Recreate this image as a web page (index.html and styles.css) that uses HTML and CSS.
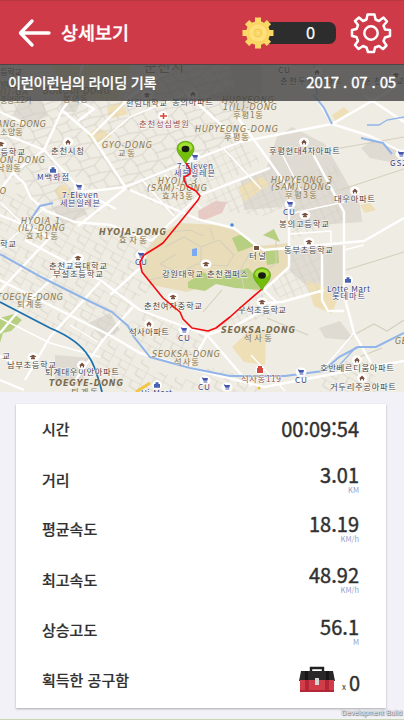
FILE: index.html
```html
<!DOCTYPE html>
<html lang="ko">
<head>
<meta charset="utf-8">
<title>상세보기</title>
<link rel="stylesheet" href="styles.css">
</head>
<body>
<div class="app">
  <header class="header">
    <svg class="back" width="34" height="30" viewBox="0 0 34 30"><path d="M14 3 2.500 15 14 27M3 15H31"/></svg>
    <h1 class="title">상세보기</h1>
    <div class="coins">
      <svg class="coin" width="32" height="32" viewBox="-16 -16 32 32">
        <g fill="#fbd765"><circle r="12"/><path id="ct" d="M-3-15.500H3V15.500H-3Z"/><use href="#ct" transform="rotate(45)"/><use href="#ct" transform="rotate(90)"/><use href="#ct" transform="rotate(135)"/></g>
        <circle r="9.300" fill="#ffe07a" stroke="#f8cd5b" stroke-width=".8"/><circle r="4" fill="#fcda69" stroke="#f3c755"/><circle r="1.700" fill="#ffe78e" stroke="#f3c755" stroke-width=".6"/>
      </svg>
      <div class="count">0</div>
    </div>
    <svg class="gear" width="42" height="42" viewBox="-21 -21 42 42">
      <path d="M-3.500-18.500H3.500L4.500-13.500 8-12 12.500-15.500 16-11.500 12.500-7.500 14-3.500 19-3V3L14 4.500 12.500 8 15.500 12.500 12 16 8 13 4 14.500 3 19H-3L-4.500 14.500-8 13-12.500 16-16 12 -13 8-14.500 4-19 3V-3L-14.500-4-13-8-16-12-12-15.500-8-12-4.500-13.500Z"/><circle r="6.700"/>
    </svg>
  </header>
  <section class="map">
    <svg class="map-art" width="404" height="328" viewBox="0 64 404 328">
      <defs>
        <pattern id="ga" width="19" height="13" patternUnits="userSpaceOnUse" patternTransform="rotate(28)"><path d="M0 0H19M0 0V13M10 0V7L19 8"/></pattern>
        <pattern id="gb" width="15" height="9" patternUnits="userSpaceOnUse" patternTransform="rotate(-25)"><path d="M0 0H15M0 0V9M7 0V9"/></pattern>
        <pattern id="gc" width="23" height="17" patternUnits="userSpaceOnUse" patternTransform="rotate(-33)"><path d="M0 0 12 3 23 0M0 0 2 9 0 17M12 3V12L0 9M12 12 23 17"/></pattern>
        <g id="school"><ellipse rx="5.500" ry="4.500" fill="#fff"/><path d="M-3.500-.5 0-2.300 3.500-.5 0 1.200ZM-2 1V2.200H2V1" fill="#79513f"/></g>
        <g id="home"><ellipse rx="5" ry="4.500" fill="#fff"/><path d="M-3 .5 0-2.500 3 .5H2V2.500H.8V1H-.8V2.500H-2V.5Z" fill="#79513f"/></g>
        <g id="cart"><ellipse rx="5.500" ry="4.500" fill="#fff"/><path d="M-3.300-2.500H-2L-1.500-2H3L2.300.8H-1.500ZM-1.500 1.500H2.300V2.500H-1.500Z" fill="#4354ae"/></g>
        <g id="mart"><ellipse rx="5" ry="4.500" fill="#fff"/><path d="M-3-1H3V2.700H-3ZM-1.500-1V-2.700H1.500V-1" fill="#4962b4"/></g>
        <g id="pin"><path d="M0 15C-2 9-8.500 6-8.500-.5A8.500 7.300 0 0 1 8.500-.5C8.500 6 2 9 0 15Z" fill="#74bd0c" stroke="#5a9e0e" stroke-width=".7"/><path d="M-7-1A7 5.500 0 0 1 7-1C5 4-5 4-7-1Z" fill="#a3df36"/><ellipse rx="3.900" ry="3.300" fill="#161c10"/></g>
      </defs>
      <path fill="#efece3" d="M0 64H404V392H0Z"/>
      <g fill="#dfdad2">
        <path d="M18 101 42 100 48 116 28 124 14 116ZM62 94 82 97 76 112 60 112ZM207 96 238 86 262 100 244 112ZM228 60H262V94L237 96ZM52 207 81 200 87 214 63 225ZM241 181 269 168 286 188 282 207 244 210ZM277 137 292 127 325 144 360 205 362 222 289 227 281 196 267 166ZM361 148 376 138 403 151 395 163 370 158ZM289 247 322 244 324 290 303 283 289 270ZM322 246 343 245 343 296 325 300ZM319 328 340 321 353 338 348 340 325 338ZM88 323 110 313 120 330 104 340ZM55 355 90 358 82 385 55 382Z"/>
      </g>
      <g fill="#eedfb7">
        <path d="M107 107 121 102 128 114 109 119ZM87 135 98 127 112 136 97 145ZM54 190 64 184 76 197 61 204ZM232 347 250 330 266 333 265 365 244 362ZM332 115 344 107 349 112 335 121ZM238 187 260 176 270 184 244 202ZM306 281 326 286 337 300 332 314 314 306ZM360 205 370 203 376 210 365 213ZM48 64 130 64 130 77 117 101 75 97Z"/>
        <path fill="#e9ddb9" d="M158 235 180 223 220 225 243 234 258 246 290 243 288 268 260 292 220 282 187 292 151 285 142 272 145 253Z"/>
      </g>
      <path fill="#e8cac4" d="M198 211 215 201 227 202 222 213 199 222Z"/>
      <path fill="#b7cf80" d="M188 282 203 272 216 279 232 273 248 268 260 281 264 290 235 288 216 284 205 291 188 288ZM232 238 242 234 254 246 238 252ZM265 250 278 248 279 263 267 265ZM0 318 14 314 22 320 11 331 3 333 0 343ZM263 235 274 229 280 242Z"/>
      <g fill="none" stroke="#d6cfbd" stroke-width="1.100"><path d="M165 247 184 237 201 247 219 240 234 255 227 266 197 264 178 273 160 264 176 254M201 247V263M250 253 240 270 244 288M150 280 190 270M203 312 222 290M163 305 200 306M276 240V263L254 280M210 228 214 240M170 232 190 230 204 236M346 270 404 252M350 337 374 324 387 331 404 320M352 360 382 348M267 318 308 335M335 149 404 137M340 190 404 169"/></g>
      <g class="streets">
        <path fill="url(#gc)" d="M0 101H128L178 64H230L240 142 188 163 126 187 90 190 45 149 0 132Z"/>
        <path fill="url(#gc)" d="M0 134 44 151 83 192 113 208 76 222 38 205 24 188 0 177Z"/>
        <path fill="url(#gb)" d="M127 188 186 162 240 142 262 161 204 195 178 216 126 189ZM202 197 268 169 287 206 264 216 210 209ZM213 330 234 313 265 292 289 310 251 321ZM295 176 337 164 344 220 291 240ZM289 250 321 246 320 290 290 287ZM265 281 288 270 321 273 319 291 282 300Z"/>
        <path fill="url(#ga)" d="M0 192 29 195 39 210 76 224 148 229 164 243 140 264 154 290 126 302 86 272 0 229ZM0 235 60 263 130 305 114 338 53 308 0 280ZM143 309 205 335 193 364 149 352 126 327ZM0 282 90 329 140 356 170 392H120L105 372 84 343 0 300ZM150 370 220 388 140 392ZM208 366 252 379 259 392H202ZM320 365 369 358 380 392H320Z"/>
      </g>
      <g class="roads">
        <path d="M0 132 44 150 83 192 116 209M44 150 62 110 73 96 83 64M73 97 94 109 78 121M0 190 13 173 44 150M13 173 24 183 31 198 46 211 75 222 111 225 151 241M83 192 125 187 188 162 240 142 332 124 360 108 404 82M185 92 240 142M236 115 270 162 289 189 289 267 264 290M130 190 200 220 234 228 257 246 264 250 321 245 364 241 404 218M200 195 270 168M151 241 200 195M312 152 344 212 344 295 354 333 371 363M322 247V300L328 311H344M332 124 315 95M332 124 370 136 404 153M364 95 404 122M264 303 282 302 324 290M25 240 100 280 140 310 207 335 235 326 277 302M0 280 113 337 140 353 197 370 264 387 354 370 404 361M100 282 50 337 25 380M78 254 20 309 0 333M133 307 103 340 70 388M53 234 0 291M207 335 251 386M207 335 190 366M140 268 110 295M264 290 277 303M0 215 24 225 48 237M0 356 20 366M0 380 24 390M0 112 26 124M126 188 78 226M126 188 91 135 63 111M178 64 131 96 91 136"/>
      </g>
      <g class="roads minor"><path d="M97 145 130 117 183 95M44 208 0 249M143 181 174 216M164 174 201 208M224 149 261 189M0 318 50 343 100 357M70 325 98 342M24 225 0 202M289 214 344 202M289 234 331 231V245M354 333 324 368M251 355 285 391M344 250 364 245M280 150 301 191"/></g>
      <g fill="none" stroke="#91b5e9" stroke-width="2"><path d="M0 254 43 278 87 300 112 312 128 326 134 337 150 357 190 368 230 376 285 376 323 371 339 357 358 347 376 347 404 333M314 95 324 108 332 124M361 138 383 143 392 154M31 219 40 206 53 203"/><path d="M367 125 379 125 387 120 404 117M314 64 317 95M336 369 356 347" stroke-width="1.300"/></g>
      <path fill="#7caaf0" d="M192 249 197 248 197 256 192 256Z"/>
      <path d="M0 302 50 328Q79 340 89 357 95 365 102 392" fill="none" stroke="#1b70ae" stroke-width="1.800"/>
      <g class="area">
        <text x="-8" y="127" textLength="54">YANG-DONG</text><text class="ko" x="0" y="135" textLength="23">소양동</text>
        <text x="0" y="163" textLength="45">ON-DONG</text><text class="ko" x="-3" y="171" textLength="24">낙원동</text>
        <text x="102" y="148" textLength="50">GYO-DONG</text><text class="ko" x="118" y="156" textLength="17">교동</text>
        <text x="195" y="132" textLength="83">HUPYEONG-DONG</text><text class="ko" x="224" y="140" textLength="25">후평동</text>
        <text x="222" y="103" textLength="52">HUPYEONG</text><text x="223" y="110" textLength="54">1(IL)-DONG</text><text class="ko" x="233" y="118" textLength="30">후평1동</text>
        <text x="21" y="224" textLength="39">HYOJA 1</text><text x="18" y="231" textLength="47">(IL)-DONG</text><text class="ko" x="26" y="239" textLength="32">효자1동</text>
        <text x="158" y="184" textLength="39">HYOJA 3</text><text x="147" y="191" textLength="60">(SAM)-DONG</text><text class="ko" x="162" y="199" textLength="31">효자3동</text>
        <text x="271" y="183" textLength="61">HUPYEONG 3</text><text x="271" y="190" textLength="60">(SAM)-DONG</text><text class="ko" x="285" y="198" textLength="32">후평3동</text>
        <text class="strong" x="99" y="235" textLength="67">HYOJA-DONG</text><text class="strong ko" x="119" y="243" textLength="28">효자동</text>
        <text x="-3" y="300" textLength="66">TOEGYE-DONG</text><text class="ko" x="17" y="307" textLength="25">퇴계동</text>
        <text class="strong" x="49" y="386" textLength="74">TOEGYE-DONG</text><text class="strong ko" x="71" y="395" textLength="27">퇴계동</text>
        <text x="152" y="357" textLength="68">SEOKSA-DONG</text><text class="ko" x="174" y="365" textLength="25">석사동</text>
        <text class="strong" x="221" y="333" textLength="74">SEOKSA-DONG</text><text class="strong ko" x="244" y="341" textLength="28">석사동</text>
        <text x="0" y="88" textLength="20">YANG</text><text x="0" y="95" textLength="28">(I)-GA</text><text class="ko" x="0" y="103" textLength="32">중앙로2가</text><text x="43" y="94" textLength="67">BONGUI-DONG</text><text class="ko" x="63" y="102" textLength="25">봉의동</text><text class="ko city" x="144" y="71" textLength="40">춘천시</text>
        <text x="-14" y="194" textLength="20">GYO</text><text x="395" y="344" textLength="32">GEODU</text>
      </g>
      <g class="poi">
        <text x="126" y="106" textLength="41">한림대학교</text><text x="172" y="105" textLength="41">봉의아파트</text><text x="51" y="154" textLength="33">춘천시청</text><text x="-8" y="155" textLength="33">초등학교</text><text x="0" y="75" textLength="22">등학교</text>
        <text x="269" y="154" textLength="71">후평현대4차아파트</text><text x="334" y="202" textLength="41">대우아파트</text><text x="279" y="227" textLength="50">봉의고등학교</text><text x="284" y="253" textLength="49">동부초등학교</text>
        <text x="0" y="247" textLength="16">학교</text><text x="49" y="269" textLength="58">춘천교육대학교</text><text x="53" y="277" textLength="50">부설초등학교</text><text x="162" y="277" textLength="41">강원대학교</text><text x="207" y="277" textLength="41">춘천캠퍼스</text><text x="249" y="259" textLength="17">터널</text>
        <text x="144" y="309" textLength="58">춘천여자중학교</text><text x="238" y="313" textLength="48">우석초등학교</text><text x="129" y="335" textLength="40">석사아파트</text><text x="7" y="368" textLength="49">남부초등학교</text><text x="-8" y="359" textLength="18">학교</text><text x="45" y="375" textLength="74">퇴계대우이안아파트</text>
        <text x="320" y="371" textLength="74">호반베르디움아파트</text><text x="330" y="390" textLength="66">거두리주공아파트</text><text x="280" y="84" textLength="62">춘천두산아파트</text><text x="363" y="84" textLength="41">춘천초교</text>
      </g>
      <g class="poi shop">
        <text x="37" y="180" textLength="32">M백화점</text><text x="62" y="198" textLength="36">7-Eleven</text><text x="60" y="206" textLength="40">세븐일레븐</text><text x="177" y="169" textLength="36">7-Eleven</text><text x="174" y="176" textLength="41">세븐일레븐</text><text x="283" y="215" textLength="12">CU</text><text x="135" y="265" textLength="12">CU</text><text x="178" y="341" textLength="12">CU</text><text x="198" y="390" textLength="12">CU</text><text x="295" y="383" textLength="12">CU</text><text x="278" y="73" textLength="12">CU</text><text x="390" y="166" textLength="22">GS25</text><text x="327" y="292" textLength="43">Lotte Mart</text><text x="332" y="299" textLength="33">롯데마트</text><text x="141" y="396" textLength="31">Hi-Mart</text>
      </g>
      <g class="poi medical"><text x="139" y="127" textLength="50">춘천성심병원</text><text x="241" y="382" textLength="40">석사동119</text></g>
      <use href="#home" x="68" y="142"/><use href="#home" x="304" y="142"/><use href="#home" x="355" y="191"/><use href="#home" x="149" y="324"/><use href="#home" x="82" y="365"/><use href="#home" x="357" y="360"/><use href="#home" x="362" y="378"/><use href="#home" x="193" y="94"/><use href="#home" x="317" y="72"/>
      <use href="#school" x="1" y="144"/><use href="#school" x="305" y="215"/><use href="#school" x="309" y="242"/><use href="#school" x="78" y="258"/><use href="#school" x="206" y="264"/><use href="#school" x="173" y="297"/><use href="#school" x="262" y="302"/><use href="#school" x="33" y="357"/><use href="#school" x="147" y="95"/><use href="#school" x="396" y="75"/>
      <use href="#cart" x="79" y="187"/><use href="#cart" x="195" y="157"/><use href="#cart" x="290" y="204"/><use href="#cart" x="141" y="255"/><use href="#cart" x="184" y="330"/><use href="#cart" x="205" y="380"/><use href="#cart" x="227" y="387"/><use href="#cart" x="301" y="372"/><use href="#cart" x="401" y="154"/>
      <use href="#mart" x="53" y="170"/><use href="#mart" x="348" y="280"/><use href="#mart" x="157" y="385"/>
      <circle cx="163" cy="116" r="5" fill="#fff"/><path d="M160 116H167M163.500 113V119" stroke="#d3483b" stroke-width="1.500"/><path d="M253 245H260V251H253Z" fill="#fff"/><path d="M254 246H259V250H254Z" fill="#735142"/><circle cx="260" cy="370" r="4.500" fill="#fff"/><path d="M257 368H263V373H257ZM258 366H262V368H258Z" fill="#d34b40"/><circle cx="232" cy="225" r="1.800" fill="#4c8ad5"/><path d="M136 392 150 383" stroke="#f4c542" stroke-width="3"/><circle cx="259" cy="388" r="1.500" fill="#f2bd3c"/>
      <path d="M186 163 190 169 190 174 184 177 184 180 187 186 196 191 200 196 198 200 163 243 157 247 144 255 140 262 142 272 163 298 180 312 183 319 192 328 208 331 216 328 230 317 240 308 262 289" fill="none" stroke="#f30b10" stroke-width="1.600" stroke-linejoin="round"/>
      <use href="#pin" x="185.500" y="149"/><use href="#pin" x="262" y="275.500"/>
    </svg>
    <div class="ride"><span class="ride-name">이런이런님의 라이딩 기록</span><span class="ride-date">2017 . 07 . 05</span></div>
  </section>
  <main class="panel">
    <dl class="card">
      <div class="row"><dt>시간</dt><dd>00:09:54</dd></div>
      <div class="row"><dt>거리</dt><dd class="distance">3.01<small>KM</small></dd></div>
      <div class="row"><dt>평균속도</dt><dd>18.19<small>KM/h</small></dd></div>
      <div class="row"><dt>최고속도</dt><dd>48.92<small>KM/h</small></dd></div>
      <div class="row"><dt>상승고도</dt><dd class="climb">56.1<small>M</small></dd></div>
      <div class="row"><dt>획득한 공구함</dt><dd class="boxes">
        <svg width="36" height="27" viewBox="0 0 36 27"><path d="M12 6V2H24V6" fill="none" stroke="#202020" stroke-width="2.400"/><path d="M2 5H34L36 15H0Z" fill="#292728"/><path d="M6 5H9V15H6ZM27 5H30V15H27Z" fill="#161415"/><path d="M1 14H35V26H1Z" fill="#d13c49"/><path d="M6 14H10V26H6ZM26 14H30V26H26ZM1 24H35V26H1Z" fill="#b32637"/><path d="M16 12H20V19H16Z" fill="#d5d5d4"/></svg>
        <span class="times">x</span><span>0</span></dd></div>
    </dl>
    <div class="build">Development Build</div>
  </main>
</div>
</body>
</html>
```
FILE: styles.css
```css
* { box-sizing: border-box; }
body { margin: 0; font-family: "Noto Sans CJK KR", sans-serif; color: #303030; background: #f2f1f7; }
.app { display: flex; flex-direction: column; width: 404px; height: 720px; overflow: hidden; }
.header { flex: 0 0 64px; display: flex; align-items: center; padding: 0 12px 0 18px; background: #cf3a49; border-top: 1px solid #b93643; }
.back { fill: none; stroke: #fff; stroke-width: 3.4; stroke-linecap: round; stroke-linejoin: round; }
.title { margin: 0 auto 0 9px; font-size: 18.5px; font-weight: 500; line-height: 28px; padding-bottom: 1px; color: #fff; -webkit-text-stroke: .3px; }
.coins { display: flex; align-items: center; margin-right: 14px; }
.coin { position: relative; z-index: 1; margin-right: -16px; }
.count { width: 78px; height: 22px; padding-left: 27px; border-radius: 0 7px 7px 0; background: #2e2d2e; color: #fff; font-size: 16.5px; line-height: 20px; text-align: center; -webkit-text-stroke: .2px; }
.gear { fill: none; stroke: #fff; stroke-width: 2.5; stroke-linejoin: round; }
.map { position: relative; flex: 0 0 328px; overflow: hidden; }
.map-art { display: block; }
.streets { opacity: .9; }
pattern path { fill: none; stroke: #d5d0c6; stroke-width: .9; }
.roads { fill: none; stroke: #fff; stroke-width: 2.4; stroke-linejoin: round; }
.roads.minor { stroke-width: 1.4; }
.area text { font: italic 8px "DejaVu Sans", sans-serif; fill: #85754f; stroke: #f2eee2; stroke-width: .4px; paint-order: stroke; }
.area .strong { font-weight: bold; fill: #796d52; }
.area .ko { font: 8.3px "Noto Sans CJK KR", sans-serif; }
.area .city { font-size: 14px; }
.poi text { font: 8.4px "Noto Sans CJK KR", sans-serif; fill: #45413d; stroke: #fff; stroke-width: .8px; paint-order: stroke; }
.poi.shop text { fill: #3c437e; font-size: 8.2px; }
.poi.medical text { fill: #914e4e; }
.ride { position: absolute; inset: 0 0 auto; height: 37px; padding: 0 8px 3px; display: flex; justify-content: space-between; align-items: center; background: rgba(65, 65, 65, .8); border-top: 1px solid #514447; color: #fff; }
.ride-name { font-size: 14.2px; font-weight: 500; letter-spacing: -.25px; -webkit-text-stroke: .2px; }
.ride-date { font-size: 15px; font-weight: 400; letter-spacing: -.15px; -webkit-text-stroke: .4px; }
.panel { position: relative; flex: 1; padding: 12px 18px 0 16px; border-bottom: 1px solid #cbd6b4; }
.card { margin: 0; height: 304px; background: #fff; box-shadow: 0 1px 2px #aaa9af; display: grid; grid-template-rows: 49px 52px 46px 56px 44px 56px; }
.row { display: flex; align-items: center; justify-content: space-between; padding: 0 27px 0 26px; }
dt { font-size: 15px; font-weight: 500; -webkit-text-stroke: .2px; }
dd { margin: 0; font-size: 20px; font-weight: 400; line-height: 20px; text-align: right; -webkit-text-stroke: .4px; }
small { display: block; height: 9px; font-size: 7.5px; line-height: 9px; color: #969dca; -webkit-text-stroke: 0; }
.distance { padding-top: 1px; }
.climb { padding-top: 4px; }
.boxes { display: flex; align-items: center; gap: 7px; margin-right: -1px; }
.boxes span:last-child { margin: 7px 0 0 -4px; }
.times { font-size: 8px; margin-top: 15px; -webkit-text-stroke: 0; }
.build { position: absolute; right: 2px; bottom: 0; font: 7px/12px "Liberation Sans", sans-serif; letter-spacing: .1px; color: #fff; text-shadow: 0 0 1px #444, 1px 1px 1px #666; }
```
